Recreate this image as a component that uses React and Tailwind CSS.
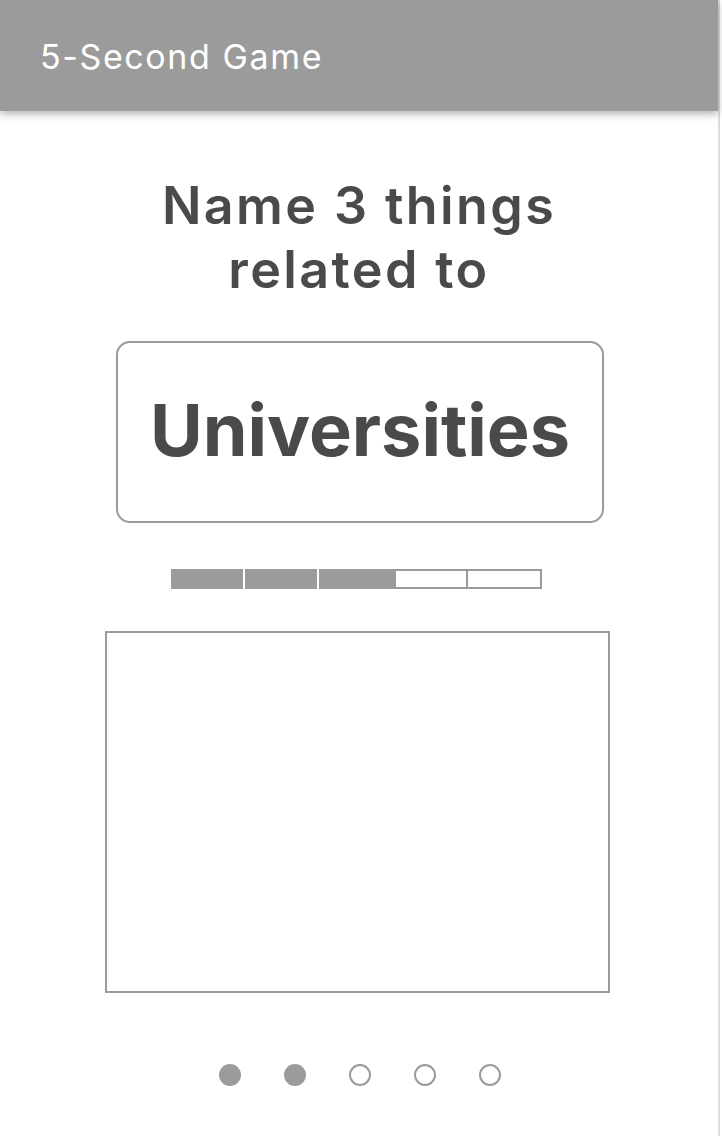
import { useState } from "react";

const SEGMENTS = [
  { w: "w-[72px]", filled: true },
  { w: "w-[72px]", filled: true },
  { w: "w-[75px]", filled: true },
];

export default function App() {
  const [answer, setAnswer] = useState("");

  return (
    <div className="w-[722px] min-h-[1136px] bg-white font-['Inter',sans-serif]">
      <div className="w-[720px] min-h-[1136px] border-r-2 border-[#dcdcdc] flex flex-col">
        <header className="h-[111px] flex items-center pl-[40px] pt-[2px] bg-[#9b9b9b] shadow-[0_3px_8px_rgba(0,0,0,0.3)]">
          <h1 className="text-[34px] text-white font-normal tracking-[1.6px]">5-Second Game</h1>
        </header>

        <div className="flex flex-col items-center">
          <h2 className="mt-[63px] text-[52px] leading-[64px] font-semibold tracking-[2.4px] text-[#4a4a4a] text-center">
            Name 3 things
            <br />
            related to
          </h2>

          <div className="mt-[39px] ml-[2px] w-[488px] h-[182px] border-2 border-[#9b9b9b] rounded-[14px] flex items-center justify-center">
            <span className="text-[72px] font-bold text-[#4a4a4a] leading-none pb-[4px]">Universities</span>
          </div>

          <div className="mt-[46px] mr-[6px] flex h-[20px]">
            {SEGMENTS.map((s, i) => (
              <div key={i} className={`${s.w} h-full bg-[#9b9b9b] ${i < 2 ? "mr-[2px]" : ""}`} />
            ))}
            <div className="w-[74px] h-full border-2 border-[#9b9b9b]" />
            <div className="w-[74px] h-full border-2 border-l-0 border-[#9b9b9b]" />
          </div>

          <textarea
            value={answer}
            onChange={(e) => setAnswer(e.target.value)}
            className="mt-[42px] mr-[4px] w-[505px] h-[362px] border-2 border-[#9b9b9b] resize-none outline-none p-3 text-[#4a4a4a]"
          />

          <div className="mt-[71px] ml-[2px] flex items-center gap-[43px]">
            <span className="w-[22px] h-[22px] rounded-full bg-[#9b9b9b]" />
            <span className="w-[22px] h-[22px] rounded-full bg-[#9b9b9b]" />
            <span className="w-[22px] h-[22px] rounded-full border-2 border-[#9b9b9b]" />
            <span className="w-[22px] h-[22px] rounded-full border-2 border-[#9b9b9b]" />
            <span className="w-[22px] h-[22px] rounded-full border-2 border-[#9b9b9b]" />
          </div>
        </div>
      </div>
    </div>
  );
}
